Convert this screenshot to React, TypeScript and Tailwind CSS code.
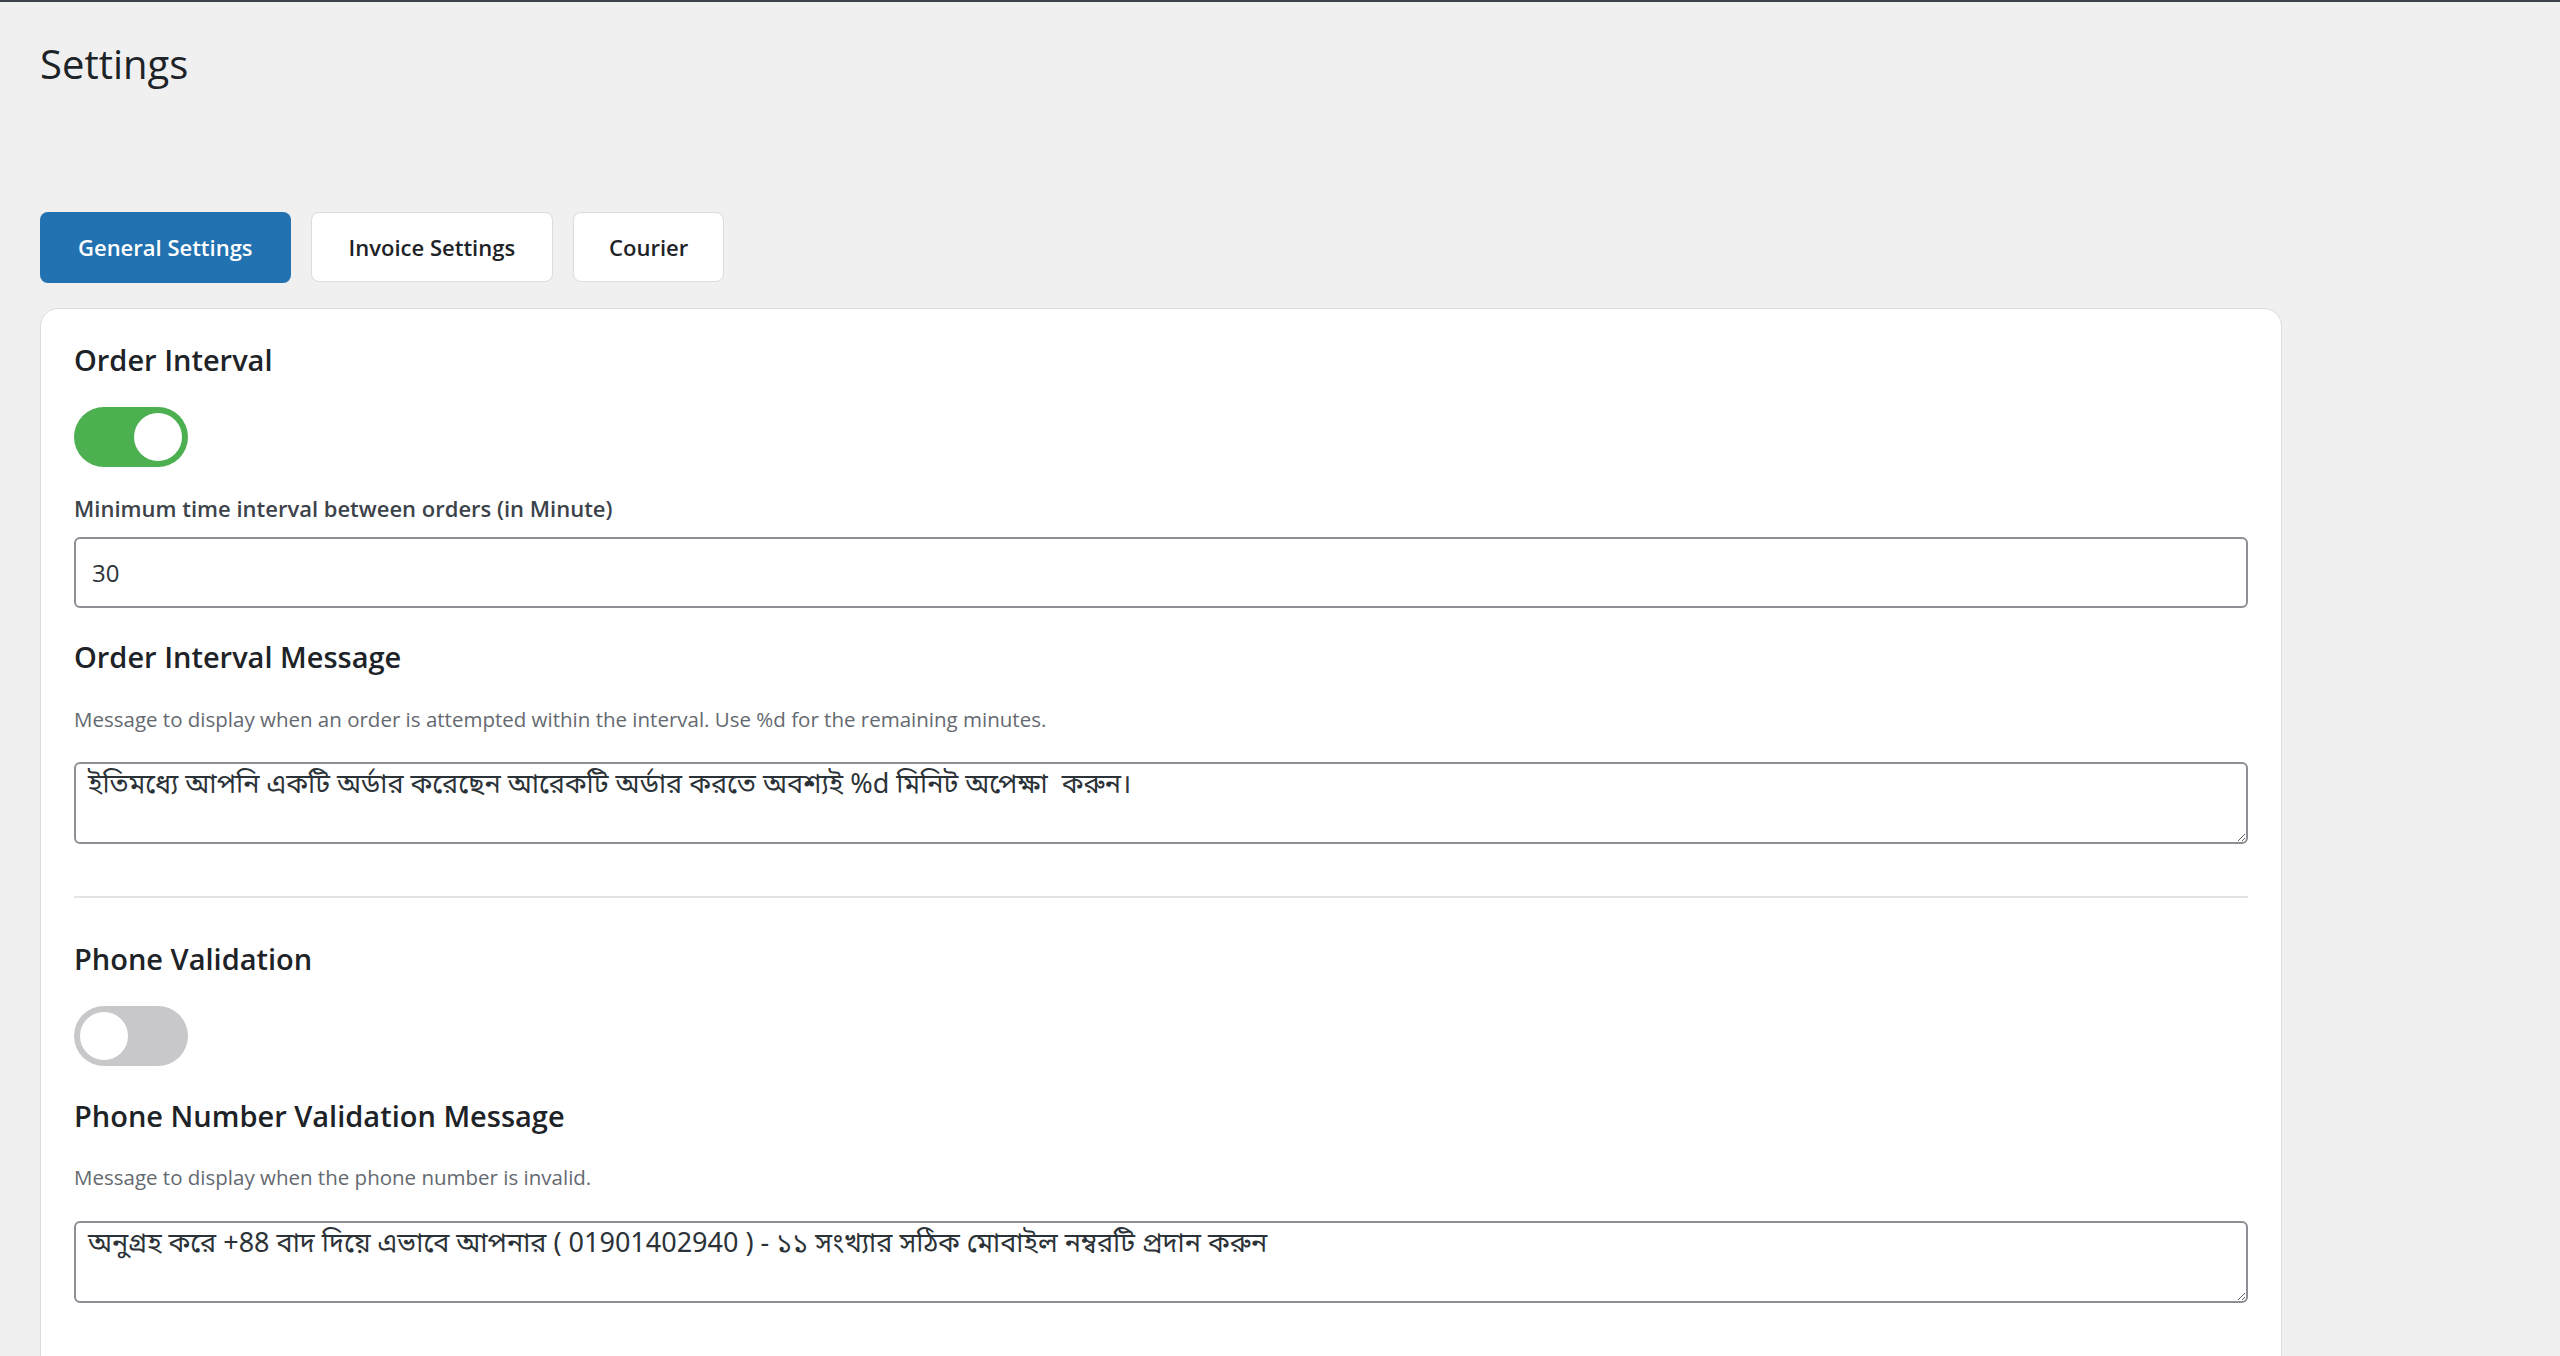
import React from "react";

const font = { fontFamily: '"Open Sans", "Noto Sans", sans-serif' };

function Toggle({ on }: { on: boolean }) {
  return (
    <div
      className={
        "flex h-[60px] w-[114px] items-center rounded-full px-[6px] " +
        (on ? "justify-end bg-[#4caf50]" : "justify-start bg-[#c8c8ca]")
      }
    >
      <div className="h-[48px] w-[48px] rounded-full bg-white" />
    </div>
  );
}

export default function App() {
  const bn = "[font-family:'Noto_Sans_Bengali','Vrinda','Lohit_Bengali','FreeSans','Noto_Sans',sans-serif]";
  return (
    <div
      className="min-h-screen border-t-[2px] border-[#3c434a] bg-[#f0f0f1] pl-[40px] pb-[80px] font-['Open_Sans','Noto_Sans',sans-serif]"
      style={font}
    >
      <h1 className="pt-[36px] text-[40px] font-normal leading-[52px] text-[#1d2327]">Settings</h1>

      <div className="mt-[122px] flex gap-[20px]">
        <button className="flex h-[71px] items-center rounded-[8px] bg-[#2271b1] px-[38px] text-[22px] font-semibold text-white">
          General Settings
        </button>
        <button className="flex h-[70px] items-center rounded-[8px] border border-[#dcdcde] bg-white px-[37px] text-[22px] font-semibold text-[#1d2327]">
          Invoice Settings
        </button>
        <button className="flex h-[70px] items-center rounded-[8px] border border-[#dcdcde] bg-white px-[35px] text-[22px] font-semibold text-[#1d2327]">
          Courier
        </button>
      </div>

      <div className="mt-[25px] w-[2242px] rounded-[18px] border border-[#dcdcde] bg-white px-[33px] pt-[30px] pb-[120px]">
        <h2 className="text-[29px] font-semibold leading-[42px] text-[#1d2327]">Order Interval</h2>
        <div className="mt-[26px]">
          <Toggle on={true} />
        </div>
        <label className="mt-[25px] block text-[22px] font-semibold leading-[33px] text-[#3c434a]">
          Minimum time interval between orders (in Minute)
        </label>
        <input
          className="mt-[12px] block h-[71px] w-full rounded-[6px] border-[2px] border-[#8c8f94] px-[16px] text-[24px] text-[#2c3338] outline-none"
          defaultValue="30"
        />

        <h2 className="mt-[28px] text-[29px] font-semibold leading-[42px] text-[#1d2327]">Order Interval Message</h2>
        <p className="mt-[25px] text-[20.5px] leading-[33px] text-[#646970]">
          Message to display when an order is attempted within the interval. Use %d for the remaining minutes.
        </p>
        <textarea
          className={"mt-[26px] block h-[82px] w-full rounded-[6px] border-[2px] border-[#8c8f94] px-[12px] pt-[3px] text-[27px] leading-[38px] text-[#2c3338] outline-none " + bn}
          defaultValue="ইতিমধ্যে আপনি একটি অর্ডার করেছেন আরেকটি অর্ডার করতে অবশ্যই %d মিনিট অপেক্ষা  করুন।"
        />

        <div className="mt-[52px] h-[2px] w-full bg-[#e4e4e7]" />

        <h2 className="mt-[40px] text-[29px] font-semibold leading-[42px] text-[#1d2327]">Phone Validation</h2>
        <div className="mt-[26px]">
          <Toggle on={false} />
        </div>

        <h2 className="mt-[29px] text-[29px] font-semibold leading-[42px] text-[#1d2327]">Phone Number Validation Message</h2>
        <p className="mt-[24px] text-[20.5px] leading-[33px] text-[#646970]">
          Message to display when the phone number is invalid.
        </p>
        <textarea
          className={"mt-[27px] block h-[82px] w-full rounded-[6px] border-[2px] border-[#8c8f94] px-[12px] pt-[3px] text-[27px] leading-[38px] text-[#2c3338] outline-none " + bn}
          defaultValue="অনুগ্রহ করে +88 বাদ দিয়ে এভাবে আপনার ( 01901402940 ) - ১১ সংখ্যার সঠিক মোবাইল নম্বরটি প্রদান করুন"
        />
      </div>
    </div>
  );
}
